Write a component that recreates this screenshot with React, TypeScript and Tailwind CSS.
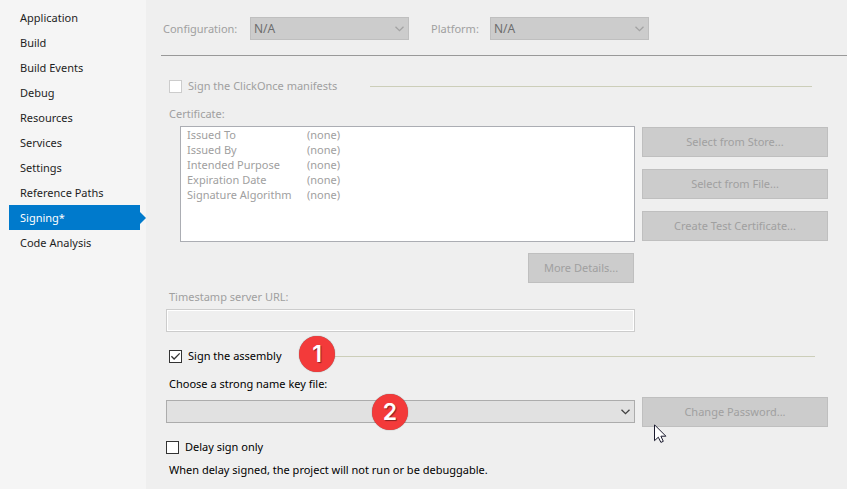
import { useState, type ReactNode } from "react";
import clsx from "clsx";

const PAGES = [
  "Application",
  "Build",
  "Build Events",
  "Debug",
  "Resources",
  "Services",
  "Settings",
  "Reference Paths",
  "Signing*",
  "Code Analysis",
];

const CERTIFICATE = [
  "Issued To",
  "Issued By",
  "Intended Purpose",
  "Expiration Date",
  "Signature Algorithm",
];

function SideNav() {
  return (
    <nav aria-label="Project properties" className="w-[146px] shrink-0 bg-[#f5f5f5] pt-[5px] pl-[9px]">
      <ul>
        {PAGES.map((page) => {
          const active = page === "Signing*";
          return (
            <li key={page} className="flex h-[25px] items-center">
              <a
                href="#"
                aria-current={active ? "page" : undefined}
                className={clsx(
                  "h-[25px] flex-1 pl-[11px] leading-[25px]",
                  active ? "bg-[#007acc] text-white" : "text-[#1e1e1e]",
                )}
              >
                {page}
              </a>
              <svg width="6" height="12" viewBox="0 0 6 12" aria-hidden="true" className="shrink-0">
                {active && <path d="M0 0 L6 6 L0 12 Z" fill="#007acc" />}
              </svg>
            </li>
          );
        })}
      </ul>
    </nav>
  );
}

function DropDown({
  id,
  disabled,
  value,
  className,
}: {
  id: string;
  disabled?: boolean;
  value: string;
  className: string;
}) {
  return (
    <div className={clsx("relative", className)}>
      <select
        id={id}
        disabled={disabled}
        className="block h-[23px] w-full appearance-none border border-[#acacac] bg-[#e1e1e1] pl-[3px] text-[12px] text-black opacity-100 disabled:border-[#bfbfbf] disabled:bg-[#cccccc] disabled:text-[#6d6d6d]"
      >
        <option>{value}</option>
      </select>
      <svg
        width="9"
        height="6"
        viewBox="0 0 9 6"
        aria-hidden="true"
        className="pointer-events-none absolute top-[9px] right-[5px]"
      >
        <path
          d="M0.5 0.7 L4.5 4.7 L8.5 0.7"
          fill="none"
          stroke={disabled ? "#a3a3a3" : "#404040"}
          strokeWidth="1.3"
        />
      </svg>
    </div>
  );
}

function CheckBox({
  label,
  initial = false,
  disabled,
  className,
}: {
  label: string;
  initial?: boolean;
  disabled?: boolean;
  className?: string;
}) {
  const [checked, setChecked] = useState(initial);
  return (
    <label
      className={clsx(
        "flex h-5 shrink-0 items-center gap-[6px] whitespace-nowrap",
        disabled && "text-[#a0a0a0]",
        className,
      )}
    >
      <span className="relative block size-[13px]">
        <input
          type="checkbox"
          checked={checked}
          disabled={disabled}
          onChange={(e) => setChecked(e.target.checked)}
          className="block size-[13px] appearance-none border border-[#333333] bg-white disabled:border-[#cccccc]"
        />
        {checked && (
          <svg
            width="13"
            height="13"
            viewBox="0 0 13 13"
            aria-hidden="true"
            className="pointer-events-none absolute inset-0"
          >
            <path d="M2.4 6.3 L5.1 9 L10.7 3.4" fill="none" stroke="#333333" strokeWidth="1.3" />
          </svg>
        )}
      </span>
      {label}
    </label>
  );
}

function PushButton({ children, className }: { children: ReactNode; className: string }) {
  return (
    <button
      type="button"
      disabled
      className={clsx(
        "block h-[30px] border border-[#bfbfbf] bg-[#cccccc] text-center text-[#a0a0a0]",
        className,
      )}
    >
      {children}
    </button>
  );
}

function StepBadge({ children, className }: { children: ReactNode; className: string }) {
  return (
    <span
      className={clsx(
        "pointer-events-none absolute flex size-9 items-center justify-center rounded-full bg-[#f33a3a] font-['Inter',sans-serif] text-[23px] font-semibold text-white shadow-[0_0_1px_0_rgba(0,0,0,0.6)] [text-shadow:1px_1px_1px_rgba(0,0,0,0.45)]",
        className,
      )}
    >
      {children}
    </span>
  );
}

function MousePointer() {
  return (
    <svg
      width="13"
      height="20"
      viewBox="0 0 13 20"
      aria-hidden="true"
      className="pointer-events-none absolute top-[27px] left-3"
    >
      <path
        d="M0.5 0.8 V16.7 L4.3 13.2 L6.9 18.4 L9.3 17.3 L6.9 12.2 H11.9 Z"
        fill="#ffffff"
        stroke="#1a1a2e"
        strokeWidth="1"
      />
    </svg>
  );
}

export default function App() {
  return (
    <div className="flex min-h-screen bg-[#efefef] font-['Noto_Sans',sans-serif] text-[11px] leading-5 text-black">
      <SideNav />
      <main className="min-w-0 flex-1 pl-[15px]">
        <header className="flex items-center border-b border-[#999999] pt-[17px] pb-[15px] pl-[2px] text-[#a0a0a0]">
          <label htmlFor="configuration" className="w-[87px]">
            Configuration:
          </label>
          <DropDown id="configuration" value="N/A" disabled className="w-[159px]" />
          <label htmlFor="platform" className="ml-[22px] w-[59px]">
            Platform:
          </label>
          <DropDown id="platform" value="N/A" disabled className="w-[159px]" />
        </header>

        <form className="pt-5 pr-[19px] pl-[5px]">
          <div className="flex items-center">
            <CheckBox label="Sign the ClickOnce manifests" disabled className="w-[204px] pl-[3px]" />
            <div className="mr-4 h-px flex-1 bg-[#ccceb9]" />
          </div>

          <p className="mt-2 pl-[3px] text-[#a0a0a0]">Certificate:</p>
          <div className="mt-[2px] grid grid-cols-[minmax(0,1fr)_186px] gap-x-[7px]">
            <div className="ml-[14px] h-[116px] border border-[#abadb3] bg-white pl-[6px]">
              <table className="text-left leading-[15px] text-[#a0a0a0]">
                <tbody>
                  {CERTIFICATE.map((field) => (
                    <tr key={field}>
                      <th scope="row" className="w-[120px] p-0 font-normal whitespace-nowrap">
                        {field}
                      </th>
                      <td className="p-0">(none)</td>
                    </tr>
                  ))}
                </tbody>
              </table>
            </div>
            <div className="flex flex-col gap-3 pt-px">
              <PushButton className="w-full">Select from Store...</PushButton>
              <PushButton className="w-full">Select from File...</PushButton>
              <PushButton className="w-full">Create Test Certificate...</PushButton>
            </div>
            <div className="mt-[11px] flex justify-end pr-px">
              <PushButton className="w-[106px]">More Details...</PushButton>
            </div>
          </div>

          <div className="mt-1 mr-[193px]">
            <label htmlFor="timestamp" className="block pl-[3px] text-[#a0a0a0]">
              Timestamp server URL:
            </label>
            <input
              id="timestamp"
              type="text"
              disabled
              className="mt-[2px] block h-[23px] w-full border border-[#cccccc] bg-[#efefef] px-1 shadow-[inset_0_0_0_1px_#ffffff]"
            />
          </div>

          <div className="relative mt-[14px] flex items-center">
            <CheckBox label="Sign the assembly" initial className="w-[150px] pl-[3px]" />
            <div className="mr-[13px] h-px flex-1 bg-[#ccceb9]" />
            <StepBadge className="-top-[10px] left-[133px]">1</StepBadge>
          </div>

          <label htmlFor="keyfile" className="mt-2 block pl-[3px]">
            Choose a strong name key file:
          </label>
          <div className="mt-[3px] grid grid-cols-[minmax(0,1fr)_186px] gap-x-[7px]">
            <div className="relative pt-[3px]">
              <DropDown id="keyfile" value="" className="w-full" />
              <StepBadge className="-top-[3px] left-[206px]">2</StepBadge>
            </div>
            <div className="relative">
              <PushButton className="w-full">Change Password...</PushButton>
              <MousePointer />
            </div>
          </div>

          <CheckBox label="Delay sign only" className="mt-[10px]" />
          <p className="mt-[3px] pl-[3px]">
            When delay signed, the project will not run or be debuggable.
          </p>
        </form>
      </main>
    </div>
  );
}
